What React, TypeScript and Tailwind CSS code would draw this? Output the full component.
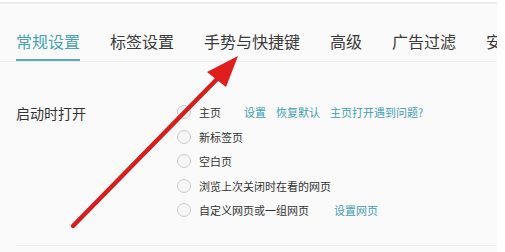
import React from "react";

const font = { fontFamily: '"Microsoft YaHei", "Noto Sans CJK SC", "Liberation Sans", sans-serif' };

function Radio({ label, links = [], gap = "ml-[23px]" }: { label: string; links?: string[]; gap?: string }) {
  return (
    <div className="flex items-center h-[24.5px]">
      <span className="w-[14px] h-[14px] rounded-full border border-[#cbcbcb] bg-[#f6f6f6] shrink-0" />
      <span className="ml-[8px] text-[11px] text-[#333]">{label}</span>
      {links.map((l, i) => (
        <span key={i} className={`${i === 0 ? gap : "ml-[10px]"} text-[11px] text-[#3f9db5]`}>{l}</span>
      ))}
    </div>
  );
}

export default function App() {
  const tabs = ["常规设置", "标签设置", "手势与快捷键", "高级", "广告过滤", "安全"];
  return (
    <div className="w-[505px] h-[252px] bg-white overflow-hidden relative" style={font}>
      <div className="w-[497px] h-[252px] bg-[#fafafa] border-t-[2px] border-[#ececec] mt-[2px] flex flex-col overflow-hidden">
        <div className="flex h-[58px] border-b border-[#ececec] pl-[16px] gap-[30px] overflow-hidden">
          {tabs.map((t, i) => (
            <div
              key={t}
              className={`pt-[27px] text-[16px] leading-[20px] whitespace-nowrap h-full shrink-0 ${i === 0 ? "text-[#46a3b5] border-b-2 border-[#5aa9b8]" : "text-[#3a3a3a]"}`}
            >
              {t}
            </div>
          ))}
        </div>
        <div className="flex pl-[16px] pt-[38px]">
          <div className="w-[161px] text-[14px] text-[#333] pt-[3px]">启动时打开</div>
          <div className="flex flex-col">
            <Radio label="主页" links={["设置", "恢复默认", "主页打开遇到问题?"]} />
            <Radio label="新标签页" />
            <Radio label="空白页" />
            <Radio label="浏览上次关闭时在看的网页" />
            <Radio label="自定义网页或一组网页" links={["设置网页"]} gap="ml-[25px]" />
          </div>
        </div>
        <div className="mt-auto mb-[8px] ml-[16px] border-t border-[#ececec]" />
      </div>
      <svg className="absolute left-0 top-0" width="505" height="252" viewBox="0 0 505 252">
        <line x1="73" y1="226" x2="220" y2="76" stroke="#d41f1f" strokeWidth="4.5" strokeLinecap="round" />
        <polygon points="238,56 207,72 226,87" fill="#e01d1d" />
      </svg>
    </div>
  );
}
